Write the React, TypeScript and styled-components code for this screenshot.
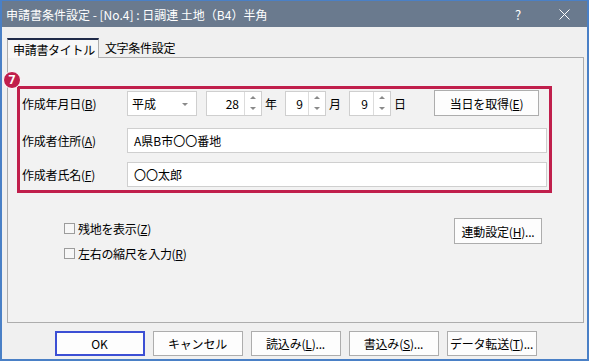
import React from "react"
import styled, { createGlobalStyle } from "styled-components"

const GlobalStyle = createGlobalStyle`
  html, body {
    margin: 0;
    padding: 0;
    background: #f0f0f0;
  }
  body {
    font-family: "Noto Sans CJK JP", "Noto Sans", sans-serif;
    font-size: 12px;
    color: #000;
  }
`

const App: React.FC = () => (
  <>
    <GlobalStyle />
    <Window>
      <TitleBar>
        <TitleText>申請書条件設定 - [No.4] : 日調連 土地（B4）半角</TitleText>
        <CaptionButton>?</CaptionButton>
        <CaptionButton>
          <svg width="11" height="11" viewBox="0 0 11 11">
            <path d="M0.5 0.5 L10.5 10.5 M10.5 0.5 L0.5 10.5" stroke="#fff" strokeWidth="1" />
          </svg>
        </CaptionButton>
      </TitleBar>

      <Body>
        <TabStrip>
          <Tab active>申請書タイトル</Tab>
          <Tab>文字条件設定</Tab>
        </TabStrip>

        <Panel>
          <HighlightWrap>
            <Badge>7</Badge>
            <HighlightBox>
              <FieldRow>
                <FieldLabel>
                  作成年月日(<Acc>B</Acc>)
                </FieldLabel>
                <Combo>
                  平成
                  <ComboArrow />
                </Combo>
                <Spin width={56} style={{ marginLeft: 9 }}>
                  <SpinValue>28</SpinValue>
                  <SpinArrows>
                    <Arrow up />
                    <Arrow />
                  </SpinArrows>
                </Spin>
                <Unit>年</Unit>
                <Spin width={41}>
                  <SpinValue>9</SpinValue>
                  <SpinArrows>
                    <Arrow up />
                    <Arrow />
                  </SpinArrows>
                </Spin>
                <Unit>月</Unit>
                <Spin width={42}>
                  <SpinValue>9</SpinValue>
                  <SpinArrows>
                    <Arrow up />
                    <Arrow />
                  </SpinArrows>
                </Spin>
                <Unit>日</Unit>
                <DialogButton width={105} height={26} style={{ marginLeft: 20 }}>
                  当日を取得(<Acc>E</Acc>)
                </DialogButton>
              </FieldRow>
              <FieldRow gap={12}>
                <FieldLabel>
                  作成者住所(<Acc>A</Acc>)
                </FieldLabel>
                <TextInput>A県B市〇〇番地</TextInput>
              </FieldRow>
              <FieldRow gap={9}>
                <FieldLabel>
                  作成者氏名(<Acc>F</Acc>)
                </FieldLabel>
                <TextInput>〇〇太郎</TextInput>
              </FieldRow>
            </HighlightBox>
          </HighlightWrap>

          <Options>
            <CheckList>
              <CheckRow>
                <CheckBox />
                <span>
                  残地を表示(<Acc>Z</Acc>)
                </span>
              </CheckRow>
              <CheckRow>
                <CheckBox />
                <span>
                  左右の縮尺を入力(<Acc>R</Acc>)
                </span>
              </CheckRow>
            </CheckList>
            <DialogButton width={88} height={26}>
              連動設定(<Acc>H</Acc>)...
            </DialogButton>
          </Options>
        </Panel>

        <Footer>
          <DialogButton primary>OK</DialogButton>
          <DialogButton>キャンセル</DialogButton>
          <DialogButton>
            読込み(<Acc>L</Acc>)...
          </DialogButton>
          <DialogButton>
            書込み(<Acc>S</Acc>)...
          </DialogButton>
          <DialogButton>
            データ転送(<Acc>T</Acc>)...
          </DialogButton>
        </Footer>
      </Body>
    </Window>
  </>
)

const Window = styled.div`
  width: 589px;
  height: 361px;
  box-sizing: border-box;
  border: 2px solid #4a80c6;
  border-top-width: 1px;
  background: #f0f0f0;
  display: flex;
  flex-direction: column;
  overflow: hidden;
`

const TitleBar = styled.div`
  height: 26px;
  flex-shrink: 0;
  display: flex;
  align-items: center;
  padding-left: 4px;
  background: #6a7a8e;
  color: #fff;
  font-size: 12px;
`

const TitleText = styled.div`
  flex: 1;
  white-space: nowrap;
`

const CaptionButton = styled.div`
  width: 46px;
  height: 26px;
  display: flex;
  align-items: center;
  justify-content: center;
  font-size: 13px;
  color: #fff;
`

const Body = styled.div`
  flex: 1;
  display: flex;
  flex-direction: column;
  padding: 11px 3px 0 5px;
`

const TabStrip = styled.div`
  display: flex;
  align-items: flex-end;
  height: 19px;
  position: relative;
  z-index: 1;
`

const Tab = styled.div<{ active?: boolean }>`
  box-sizing: border-box;
  height: ${(p) => (p.active ? "20px" : "19px")};
  margin-bottom: ${(p) => (p.active ? "-1px" : "0")};
  display: flex;
  align-items: center;
  padding: ${(p) => (p.active ? "0 3px 0 5px" : "0 6px")};
  white-space: nowrap;
  letter-spacing: -0.3px;
  background: ${(p) => (p.active ? "#f7f7f7" : "transparent")};
  border-top: ${(p) => (p.active ? "2px solid #1f2a48" : "none")};
  border-left: ${(p) => (p.active ? "1px solid #adadad" : "none")};
  border-right: ${(p) => (p.active ? "1px solid #adadad" : "none")};
`

const Panel = styled.div`
  box-sizing: border-box;
  height: 266px;
  border: 1px solid #adadad;
  background: #f2f2f2;
  padding: 28px 0 0 9px;
`

const HighlightWrap = styled.div`
  position: relative;
  width: 535px;
`

const Badge = styled.div`
  position: absolute;
  left: -14px;
  top: -15px;
  width: 16px;
  height: 16px;
  border-radius: 50%;
  border: 1.5px solid #fff;
  background: #c01f4c;
  color: #fff;
  font-family: "Noto Sans", sans-serif;
  font-weight: 700;
  font-size: 12px;
  line-height: 16px;
  text-align: center;
  z-index: 2;
`

const HighlightBox = styled.div`
  box-sizing: border-box;
  width: 535px;
  border: 3px solid #c01f4c;
  padding: 1px 2px 3px 2px;
`

const FieldRow = styled.div<{ gap?: number }>`
  display: flex;
  align-items: center;
  height: ${(p) => (p.gap ? "25px" : "26px")};
  margin-top: ${(p) => p.gap ?? 0}px;
`

const FieldLabel = styled.div`
  width: 105px;
  flex-shrink: 0;
  white-space: nowrap;
  letter-spacing: -0.2px;
`

const Acc = styled.u`
  text-decoration: underline;
  text-underline-offset: 1px;
`

const Field = styled.div`
  box-sizing: border-box;
  height: 25px;
  background: #fff;
  border: 1px solid #cfcfcf;
  display: flex;
  align-items: center;
`

const Combo = styled(Field)`
  width: 70px;
  padding-left: 4px;
  position: relative;
`

const ComboArrow = styled.span`
  position: absolute;
  right: 8px;
  top: 11px;
  border-left: 3px solid transparent;
  border-right: 3px solid transparent;
  border-top: 3px solid #8a8a8a;
`

const Spin = styled(Field)<{ width: number }>`
  width: ${(p) => p.width}px;
`

const SpinValue = styled.div`
  flex: 1;
  text-align: right;
  padding-right: 5px;
`

const SpinArrows = styled.div`
  width: 16px;
  height: 100%;
  border-left: 1px solid #dcdcdc;
  display: flex;
  flex-direction: column;
  align-items: center;
  justify-content: center;
  gap: 8px;
`

const Arrow = styled.span<{ up?: boolean }>`
  width: 0;
  height: 0;
  border-left: 3px solid transparent;
  border-right: 3px solid transparent;
  ${(p) => (p.up ? "border-bottom: 3px solid #8a8a8a;" : "border-top: 3px solid #8a8a8a;")}
`

const Unit = styled.span`
  margin: 0 8px 0 3px;
`

const TextInput = styled(Field)`
  width: 420px;
  padding-left: 6px;
`

const Options = styled.div`
  display: flex;
  justify-content: space-between;
  align-items: flex-start;
  margin-top: 25px;
  padding: 0 41px 0 47px;
`

const CheckList = styled.div`
  display: flex;
  flex-direction: column;
  gap: 5px;
`

const CheckRow = styled.div`
  height: 20px;
  display: flex;
  align-items: center;
  gap: 3px;
  letter-spacing: -0.3px;
`

const CheckBox = styled.span`
  box-sizing: border-box;
  width: 11px;
  height: 11px;
  border: 1px solid #9c9c9c;
  background: #f7f7f7;
`

const DialogButton = styled.div<{ width?: number; height?: number; primary?: boolean }>`
  box-sizing: border-box;
  width: ${(p) => p.width ?? 90}px;
  height: ${(p) => p.height ?? 25}px;
  display: flex;
  align-items: center;
  justify-content: center;
  flex-shrink: 0;
  white-space: nowrap;
  letter-spacing: -0.2px;
  background: #fdfdfd;
  border: ${(p) => (p.primary ? "1px solid #3c4fd4" : "1px solid #adadad")};
  box-shadow: ${(p) => (p.primary ? "inset 0 0 0 1px #3c4fd4" : "none")};
`

const Footer = styled.div`
  display: flex;
  justify-content: center;
  gap: 8px;
  margin-top: 8px;
`

export default App
